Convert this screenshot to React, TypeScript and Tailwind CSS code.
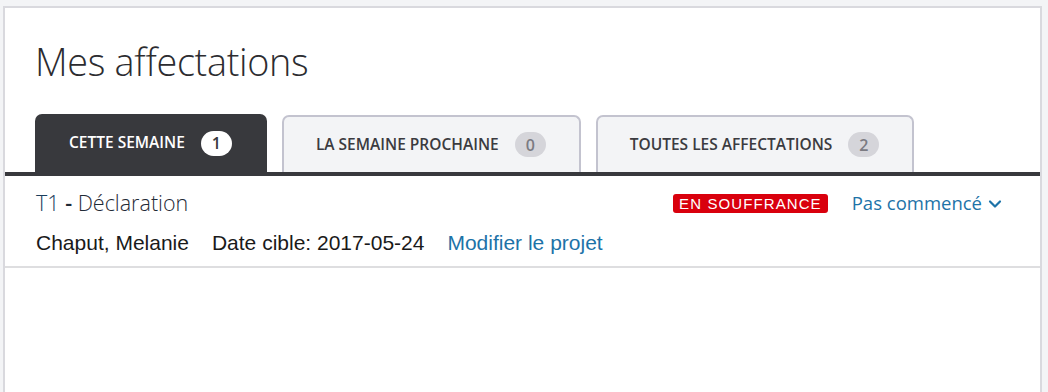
import React from 'react';

type Tab = { id: string; label: string; count: number };

const tabs: Tab[] = [
  { id: 'this', label: 'CETTE SEMAINE', count: 1 },
  { id: 'next', label: 'LA SEMAINE PROCHAINE', count: 0 },
  { id: 'all', label: 'TOUTES LES AFFECTATIONS', count: 2 },
];

const ChevronDown = () => (
  <svg width="14" height="14" viewBox="0 0 14 14" fill="none" className="ml-[6px] mt-[1px]">
    <path d="M2 4.5l5 5 5-5" stroke="currentColor" strokeWidth="2.2" strokeLinecap="round" strokeLinejoin="round" />
  </svg>
);

export default function App() {
  const active = 'this';

  return (
    <div className="h-[392px] overflow-hidden bg-[#f3f4f6] pt-[6px] pl-[3px]">
      <div className="w-[1039px] h-[400px] border-2 border-[#d9d9de] bg-white">
        {/* Title */}
        <h1 className="pl-[30px] pt-[30px] text-[37.8px] leading-[48px] font-light text-[#2c2c30] font-['Open_Sans',sans-serif] tracking-[-0.3px]">
          Mes affectations
        </h1>

        {/* Tabs */}
        <div className="mt-[28px] flex items-end gap-[15px] pl-[30px] border-b-4 border-[#38393d]">
          {tabs.map((tab) => {
            const isActive = tab.id === active;
            return (
              <div
                key={tab.id}
                className={`flex items-center rounded-t-[7px] font-['Open_Sans',sans-serif] text-[15.5px] font-semibold ${
                  isActive
                    ? 'h-[58px] pl-[34px] pr-[35px] bg-[#38393d] text-white'
                    : 'h-[57px] bg-[#f3f4f6] text-[#3b3b40] border-2 border-b-0 border-[#c3c3cf] pl-[32px] pr-[33px]'
                }`}
              >
                <span>{tab.label}</span>
                <span
                  className={`ml-[16px] flex items-center justify-center w-[31px] h-[25px] rounded-full text-[16px] font-semibold ${
                    isActive ? 'bg-white text-[#38393d]' : 'bg-[#d5d5da] text-[#7b7b82]'
                  }`}
                >
                  {tab.count}
                </span>
              </div>
            );
          })}
        </div>

        {/* Assignment row */}
        <div className="border-b-2 border-[#dedee0] pl-[31px] pr-[38px] pt-[13px] pb-[11px]">
          <div className="flex items-center justify-between">
            <div className="text-[21.5px] leading-[28px] font-light text-[#1f2a36] font-['Open_Sans',sans-serif]">
              <span className="text-[#1b3d5c]">T1</span> <span className="font-semibold">-</span> Déclaration
            </div>
            <div className="flex items-center">
              <span className="bg-[#d9000d] text-white text-[15px] leading-[19px] tracking-[1.1px] px-[6px] rounded-[3px] font-['Liberation_Sans',Arial,sans-serif]">
                EN SOUFFRANCE
              </span>
              <span className="ml-[24px] flex items-center text-[18.5px] text-[#1d73a8] font-['Open_Sans',sans-serif]">
                Pas commencé
                <ChevronDown />
              </span>
            </div>
          </div>
          <div className="mt-[14px] flex items-center text-[21px] leading-[24px] text-[#1a1a1a] font-['Liberation_Sans',Arial,sans-serif]">
            <span>Chaput, Melanie</span>
            <span className="ml-[23px]">Date cible: 2017-05-24</span>
            <span className="ml-[23px] text-[#1d73a8]">Modifier le projet</span>
          </div>
        </div>
      </div>
    </div>
  );
}
